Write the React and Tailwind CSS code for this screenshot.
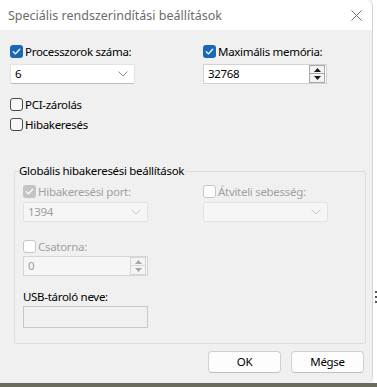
import React from "react";

const FONT = { fontFamily: '"Segoe UI", "Noto Sans", "Open Sans", sans-serif' };

function Checkbox({ checked, disabled }) {
  let cls = "w-[13px] h-[13px] rounded-[3px] flex items-center justify-center shrink-0 ";
  if (checked && !disabled) cls += "bg-[#1a67b8]";
  else if (checked && disabled) cls += "bg-[#c4c4c4]";
  else if (disabled) cls += "bg-white border border-[#c6c6c6]";
  else cls += "bg-[#f7f7f7] border border-[#4a4a4a]";
  return (
    <div className={cls}>
      {checked && (
        <svg width="9" height="9" viewBox="0 0 9 9">
          <polyline points="1.3,4.8 3.4,6.9 7.7,2.2" fill="none" stroke="#fff" strokeWidth="1.3" strokeLinecap="round" strokeLinejoin="round" />
        </svg>
      )}
    </div>
  );
}

function CheckRow({ checked, disabled, label, className = "" }) {
  return (
    <div className={"flex items-center h-[15px] gap-[2px] " + className}>
      <Checkbox checked={checked} disabled={disabled} />
      <span className={"text-[11.5px] leading-[15px] tracking-[-0.3px] " + (disabled ? "text-[#a0a0a0]" : "text-black")}>{label}</span>
    </div>
  );
}

function Chevron({ color }) {
  return (
    <svg width="10" height="6" viewBox="0 0 10 6">
      <polyline points="0.5,0.5 5,5 9.5,0.5" fill="none" stroke={color} strokeWidth="1" />
    </svg>
  );
}

function Select({ value, disabled, w }) {
  return (
    <div
      className={
        "h-[20px] flex items-center justify-between pl-[4px] pr-[6px] rounded-[2px] border " +
        (disabled ? "bg-[#f6f6f6] border-[#e2e2e2] text-[#9c9c9c]" : "bg-white border-[#e2e2e2] border-b-[#bdbdbd] text-black") +
        " " + w
      }
    >
      <span className="text-[11.5px] leading-[18px] tracking-[-0.3px]">{value}</span>
      <Chevron color={disabled ? "#c8c8c8" : "#8a8a8a"} />
    </div>
  );
}

function Arrow({ up, disabled }) {
  return (
    <svg width="7" height="4" viewBox="0 0 7 4">
      <polygon points={up ? "0,4 7,4 3.5,0" : "0,0 7,0 3.5,4"} fill={disabled ? "#a8a8a8" : "#1a1a1a"} />
    </svg>
  );
}

function Spin({ value, disabled, w }) {
  return (
    <div
      className={
        "h-[20px] flex items-center border " +
        (disabled ? "bg-[#f6f6f6] border-[#d6d6d6] text-[#9c9c9c]" : "bg-white border-[#d2d2d2] text-black") +
        " " + w
      }
    >
      <span className="flex-1 pl-[4px] text-[11.5px] leading-[18px] tracking-[-0.3px]">{value}</span>
      <div className="flex flex-col mr-[1px]">
        <div className={"w-[16px] h-[9px] flex items-center justify-center border " + (disabled ? "border-[#d6d6d6] bg-[#f4f4f4]" : "border-[#a8a8a8] bg-[#f3f3f3]")}>
          <Arrow up disabled={disabled} />
        </div>
        <div className={"w-[16px] h-[9px] flex items-center justify-center border border-t-0 " + (disabled ? "border-[#d6d6d6] bg-[#f4f4f4]" : "border-[#a8a8a8] bg-[#f3f3f3]")}>
          <Arrow disabled={disabled} />
        </div>
      </div>
    </div>
  );
}

function Button({ children }) {
  return (
    <div className="w-[73px] h-[22px] rounded-[4px] border border-[#d0d0d0] border-b-[#c0c0c0] bg-[#fdfdfd] flex items-center justify-center text-[11.5px] tracking-[-0.3px] text-black">
      {children}
    </div>
  );
}

export default function App() {
  return (
    <div className="w-[377px] h-[387px] bg-[#f4f4f4] flex flex-col overflow-hidden" style={FONT}>
      <div className="flex h-[383px]">
        <div className="w-[373px] h-[383px] flex flex-col border-r border-[#d4d4d4] rounded-tr-[7px] rounded-br-[7px] overflow-hidden">
          <div className="h-[30px] bg-white flex items-center justify-between pl-[8px] pr-[10px]">
            <span className="text-[12.5px] text-[#6b6b6b] leading-[16px] pt-[1px]">Speciális rendszerindítási beállítások</span>
            <svg width="11" height="11" viewBox="0 0 11 11">
              <line x1="0.5" y1="0.5" x2="10.5" y2="10.5" stroke="#6e6e6e" strokeWidth="1" />
              <line x1="10.5" y1="0.5" x2="0.5" y2="10.5" stroke="#6e6e6e" strokeWidth="1" />
            </svg>
          </div>
          <div className="flex-1 bg-[#f0f0f0] pl-[10px] pt-[14px]">
            <div className="flex">
              <div className="w-[193px] flex flex-col">
                <CheckRow checked label="Processzorok száma:" />
                <div className="mt-[5px]">
                  <Select value="6" w="w-[125px]" />
                </div>
                <CheckRow label="PCI-zárolás" className="mt-[13px]" />
                <CheckRow label="Hibakeresés" className="mt-[5px]" />
              </div>
              <div className="flex flex-col">
                <CheckRow checked label="Maximális memória:" />
                <div className="mt-[5px]">
                  <Spin value="32768" w="w-[124px]" />
                </div>
              </div>
            </div>
            <fieldset className="ml-[4px] mt-[31px] w-[352px] h-[181px] border border-[#dcdcdc] rounded-[2px]">
              <legend className="ml-[3px] px-[1px] text-[11.5px] leading-[16px] tracking-[-0.3px] text-black">Globális hibakeresési beállítások</legend>
              <div className="flex pl-[8px] pt-[5px]">
                <div className="w-[180px] flex flex-col">
                  <CheckRow checked disabled label="Hibakeresési port:" />
                  <div className="mt-[3px]">
                    <Select value="1394" disabled w="w-[125px]" />
                  </div>
                  <CheckRow disabled label="Csatorna:" className="mt-[17px]" />
                  <div className="mt-[2px]">
                    <Spin value="0" disabled w="w-[125px]" />
                  </div>
                  <span className="mt-[13px] text-[11.5px] leading-[15px] tracking-[-0.3px] text-black">USB-tároló neve:</span>
                  <div className="mt-[2px] w-[125px] h-[22px] border border-[#c8c8c8] bg-[#f0f0f0]" />
                </div>
                <div className="flex flex-col">
                  <CheckRow disabled label="Átviteli sebesség:" />
                  <div className="mt-[3px]">
                    <Select value="" disabled w="w-[125px]" />
                  </div>
                </div>
              </div>
            </fieldset>
            <div className="flex justify-end gap-[10px] pr-[8px] mt-[7px]">
              <Button>OK</Button>
              <Button>Mégse</Button>
            </div>
          </div>
        </div>
        <div className="flex-1 bg-white flex flex-col justify-end pb-[80px] items-end">
          <div className="w-[2px] h-[2px] bg-[#555]" />
          <div className="w-[2px] h-[2px] bg-[#555] mt-[3px]" />
          <div className="w-[2px] h-[2px] bg-[#555] mt-[3px]" />
        </div>
      </div>
      <div className="h-[4px] bg-[#6c6a5d]" />
    </div>
  );
}
